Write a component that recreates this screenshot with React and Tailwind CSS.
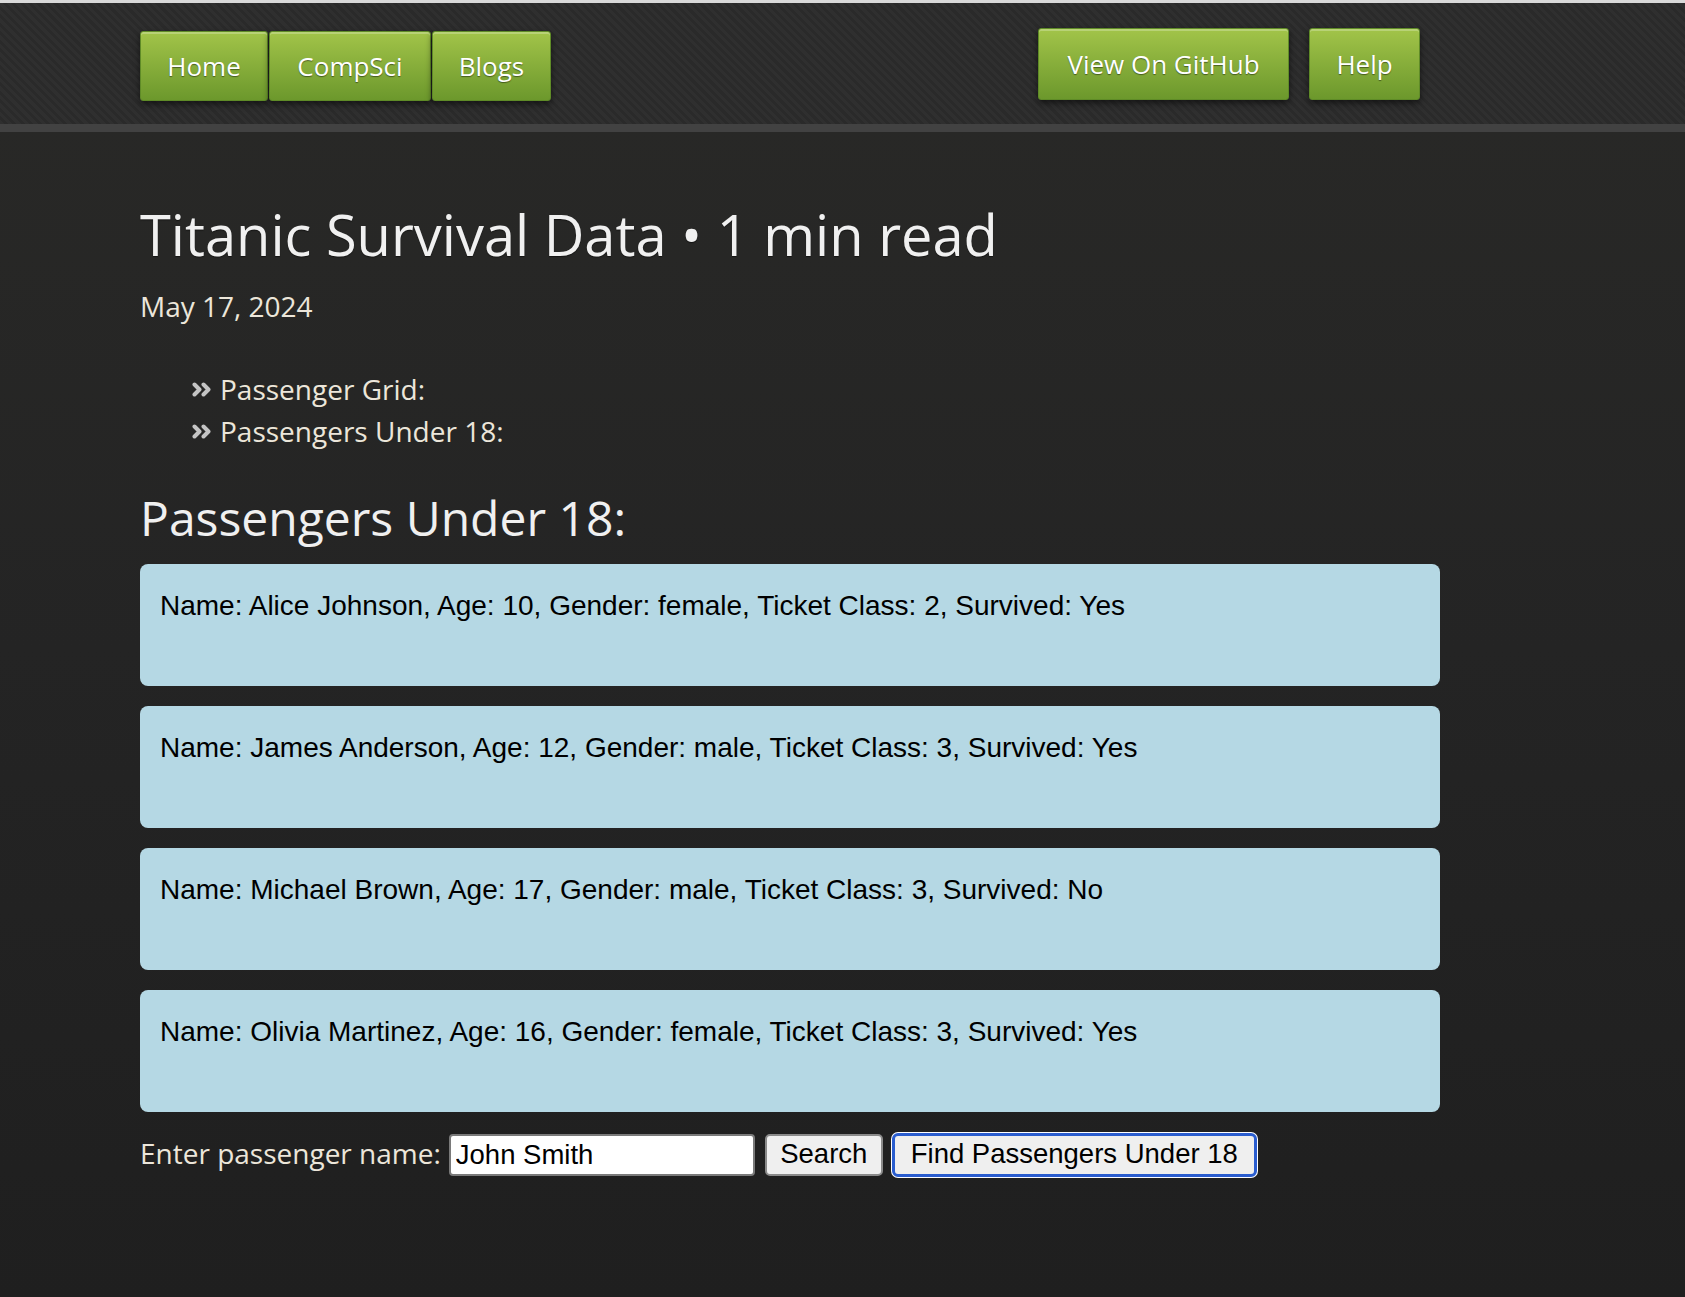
import React from "react";

const navBtn =
  "flex items-center justify-center h-[70px] rounded-[3px] border border-[#5f8b27] bg-gradient-to-b from-[#a2c449] to-[#6c982c] text-white text-[26px] font-['Open_Sans',sans-serif] [text-shadow:0_1px_1px_rgba(0,0,0,0.45)] shadow-[inset_0_2px_0_rgba(255,255,255,0.25),0_3px_6px_rgba(0,0,0,0.55)]";

function Chevrons() {
  return (
    <svg width="20" height="15" viewBox="0 0 20 15" className="shrink-0">
      <path d="M2.5 2.5 L7.5 7.5 L2.5 12.5" fill="none" stroke="#c4c4c4" strokeWidth="4" strokeLinecap="round" strokeLinejoin="round" />
      <path d="M11.5 2.5 L16.5 7.5 L11.5 12.5" fill="none" stroke="#c4c4c4" strokeWidth="4" strokeLinecap="round" strokeLinejoin="round" />
    </svg>
  );
}

const passengers = [
  "Name: Alice Johnson, Age: 10, Gender: female, Ticket Class: 2, Survived: Yes",
  "Name: James Anderson, Age: 12, Gender: male, Ticket Class: 3, Survived: Yes",
  "Name: Michael Brown, Age: 17, Gender: male, Ticket Class: 3, Survived: No",
  "Name: Olivia Martinez, Age: 16, Gender: female, Ticket Class: 3, Survived: Yes",
];

export default function App() {
  return (
    <div className="min-h-[1297px] w-full bg-gradient-to-b from-[#292927] via-[#242424] to-[#1f1f1f] font-['Open_Sans',sans-serif]">
      <div className="h-[3px] bg-[#d9d9d9]" />
      <header className="h-[121px] bg-[repeating-linear-gradient(45deg,#2f2f2f_0px,#2f2f2f_3px,#2a2a2a_3px,#2a2a2a_6px)]">
        <div className="ml-[140px] w-[1280px] flex justify-between items-start">
          <nav className="flex gap-[1px] pt-[28px]">
            <a className={navBtn + " w-[128px]"}>Home</a>
            <a className={navBtn + " w-[162px]"}>CompSci</a>
            <a className={navBtn + " w-[119px]"}>Blogs</a>
          </nav>
          <div className="flex gap-[20px] pt-[25px]">
            <a className={navBtn + " w-[251px] h-[72px]"}>View On GitHub</a>
            <a className={navBtn + " w-[111px] h-[72px]"}>Help</a>
          </div>
        </div>
      </header>
      <div className="h-[8px] bg-[#424242]" />

      <main className="ml-[140px] w-[1300px] pt-[70px]">
        <h1 className="text-[56px] leading-[64px] text-[#f0f0f0] font-normal [text-shadow:0_1px_1px_rgba(0,0,0,0.5)]">
          Titanic Survival Data • 1 min read
        </h1>
        <p className="mt-[19px] text-[28px] leading-[42px] text-[#ece6da]">May 17, 2024</p>

        <ul className="mt-[41px] ml-[52px] text-[28px] leading-[42px] text-[#ece6da]">
          <li className="flex items-center gap-[8px]">
            <Chevrons />
            <span>Passenger Grid:</span>
          </li>
          <li className="flex items-center gap-[8px]">
            <Chevrons />
            <span>Passengers Under 18:</span>
          </li>
        </ul>

        <h2 className="mt-[38px] text-[48px] leading-[56px] text-[#f0f0f0] font-normal">Passengers Under 18:</h2>

        <div className="mt-[18px] flex flex-col gap-[20px]">
          {passengers.map((p) => (
            <div
              key={p}
              className="h-[122px] rounded-[8px] bg-[#b5d8e4] pl-[20px] pt-[26px] font-['Liberation_Sans',Arial,sans-serif] text-[28px] leading-[32px] text-black"
            >
              {p}
            </div>
          ))}
        </div>

        <div className="mt-[21px] flex items-center">
          <label className="-mt-[4px] text-[28px] leading-[42px] text-[#ece6da]">Enter passenger name:</label>
          <input
            defaultValue="John Smith"
            className="ml-[8px] h-[42px] w-[306px] rounded-[4px] border-2 border-[#7a7a7a] bg-white px-[5px] font-['Liberation_Sans',Arial,sans-serif] text-[27.5px] text-black outline-none"
          />
          <button className="ml-[10px] h-[42px] w-[118px] rounded-[5px] border-2 border-[#8a8a8a] bg-[#efefef] pb-[3px] font-['Liberation_Sans',Arial,sans-serif] text-[27.5px] leading-[30px] text-black">
            Search
          </button>
          <button className="ml-[9px] h-[44px] w-[365px] rounded-[6px] border-[3px] border-[#2a5dcf] bg-[#efefef] pb-[3px] font-['Liberation_Sans',Arial,sans-serif] text-[27.5px] leading-[30px] text-black ring-1 ring-white">
            Find Passengers Under 18
          </button>
        </div>
      </main>
    </div>
  );
}
